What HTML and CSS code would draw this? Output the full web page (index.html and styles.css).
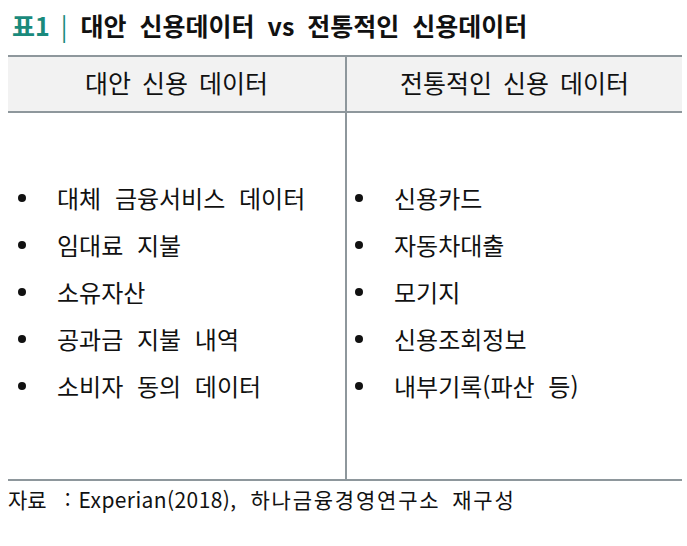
FILE: index.html
```html
<!DOCTYPE html>
<html lang="ko">
<head>
<meta charset="utf-8">
<link rel="stylesheet" href="styles.css">
</head>
<body>
<div class="page">
  <h1 class="title"><span class="num">표1</span><span class="bar">|</span><span class="ttext">대안 신용데이터 vs 전통적인 신용데이터</span></h1>
  <div class="table">
    <div class="head">
      <div class="hcell">대안 신용 데이터</div>
      <div class="hcell right">전통적인 신용 데이터</div>
    </div>
    <div class="body">
      <div class="bcell">
        <ul class="list">
          <li>대체 금융서비스 데이터</li>
          <li>임대료 지불</li>
          <li>소유자산</li>
          <li>공과금 지불 내역</li>
          <li>소비자 동의 데이터</li>
        </ul>
      </div>
      <div class="bcell right">
        <ul class="list">
          <li>신용카드</li>
          <li>자동차대출</li>
          <li>모기지</li>
          <li>신용조회정보</li>
          <li>내부기록(파산 등)</li>
        </ul>
      </div>
    </div>
  </div>
  <p class="note"><span class="src">자료</span><span class="colon">:</span><span class="latin">Experian(2018),</span> <span class="org">하나금융경영연구소 재구성</span></p>
</div>
</body>
</html>
```
FILE: styles.css
```css
* { box-sizing: border-box; }
html, body { margin: 0; padding: 0; background: #fff; }
body {
  font-family: "Noto Sans CJK KR", "Noto Sans", sans-serif;
  color: #111;
}
.page { width: 687px; height: 546px; padding: 3px 0 0 0; }
.title {
  margin: 0 0 0 12px;
  height: 44px;
  font-size: 25px;
  font-weight: 700;
  line-height: 34px;
  display: flex;
  align-items: center;
}
.num { color: #1a8a7c; }
.bar { color: #1a8a7c; font-weight: 400; margin: 0 13px 0 11px; }
.ttext { color: #111; word-spacing: 6px; }
.table {
  margin: 8px 0 0 8px;
  width: 674px;
  border-top: 2px solid #8e979c;
  border-bottom: 2px solid #8e979c;
}
.head {
  display: grid;
  grid-template-columns: 337px 337px;
  height: 56px;
  background: #f2f2f2;
  border-bottom: 2px solid #8e979c;
}
.hcell {
  display: flex;
  align-items: center;
  justify-content: center;
  font-size: 25px;
  word-spacing: 4px;
  padding-bottom: 4px;
}
.right { border-left: 2px solid #8e979c; }
.body {
  display: grid;
  grid-template-columns: 337px 337px;
  height: 366px;
}
.bcell { display: flex; align-items: center; padding-bottom: 9px; }
.list {
  list-style: none;
  margin: 0;
  padding: 0;
}
.list li {
  position: relative;
  font-size: 24px;
  line-height: 47px;
  padding-left: 49px;
  word-spacing: 7px;
}
.list li::before {
  content: "";
  position: absolute;
  left: 10px;
  top: 20px;
  width: 8px;
  height: 8px;
  border-radius: 50%;
  background: #111;
}
.bcell.right .list li::before { left: 8px; }
.bcell.right .list li { padding-left: 47px; }
.note {
  margin: 3px 0 0 8px;
  font-size: 21px;
  line-height: 30px;
  word-spacing: 8px;
}
.colon { margin: 0 8px 0 18px; }
.latin { letter-spacing: 0.4px; }
.org { letter-spacing: 1.8px; word-spacing: 4px; }
```
